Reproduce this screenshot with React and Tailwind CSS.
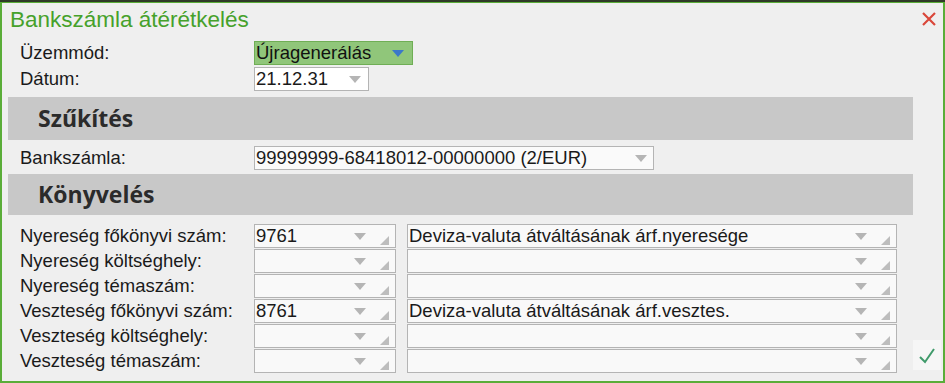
import React from "react";

const font = { fontFamily: '"Liberation Sans", Arial, sans-serif' };

function Tri({ color = "#b5b5b5" }) {
  return (
    <svg width="12" height="7" viewBox="0 0 12 7" className="shrink-0">
      <path d="M0 0 L12 0 L6 7 Z" fill={color} />
    </svg>
  );
}

function Corner() {
  return (
    <svg width="9" height="9" viewBox="0 0 9 9" className="shrink-0">
      <path d="M9 0 L9 9 L0 9 Z" fill="#bdbdbd" />
    </svg>
  );
}

function Field({ value, w, corner, bg = "bg-[#f9f9f9]" }) {
  return (
    <div
      className={`flex h-[24px] items-center border border-[#b4b4b4] ${bg} pl-[1px] pr-[6px]`}
      style={{ width: w }}
    >
      <span className="flex-1 overflow-hidden whitespace-nowrap text-[18.5px] leading-[22px] text-[#1a1a1a]">{value}</span>
      <div className="mt-[1px] flex items-center gap-[14px]">
        <Tri />
        {corner && <div className="mt-[7px]"><Corner /></div>}
      </div>
    </div>
  );
}

function Section({ title, h }) {
  return (
    <div
      className="mr-[30px] ml-[6px] flex items-center bg-[#c8c8c8] pl-[30px]"
      style={{ height: h }}
    >
      <span
        className="text-[23px] font-bold text-[#2b2b2b]"
        style={{ fontFamily: '"Open Sans", "Noto Sans", sans-serif' }}
      >
        {title}
      </span>
    </div>
  );
}

const rows = [
  ["Nyereség főkönyvi szám:", "9761", "Deviza-valuta átváltásának árf.nyeresége"],
  ["Nyereség költséghely:", "", ""],
  ["Nyereség témaszám:", "", ""],
  ["Veszteség főkönyvi szám:", "8761", "Deviza-valuta átváltásának árf.vesztes."],
  ["Veszteség költséghely:", "", ""],
  ["Veszteség témaszám:", "", ""],
];

export default function App() {
  return (
    <div className="h-[383px] w-[945px] bg-[#2f3a28] pt-[2px]" style={font}>
      <div className="flex h-[381px] flex-col border-2 border-t-1 border-[#5aad38] bg-[#efefef]">
        <div className="flex h-[34px] items-center justify-between pl-[8px] pr-[6px]">
          <span className="text-[22.5px] text-[#46a12b]">Bankszámla átérétkelés</span>
          <svg width="16" height="16" viewBox="0 0 16 16" className="mb-[2px]">
            <path d="M2 2 L14 14 M14 2 L2 14" stroke="#d9473a" strokeWidth="2.2" />
          </svg>
        </div>

        <div className="mt-[4px] flex h-[24px] items-center pl-[18px]">
          <span className="w-[234px] text-[18.5px] text-[#1a1a1a]">Üzemmód:</span>
          <div className="flex h-[24px] w-[159px] items-center border border-[#6fae55] bg-[#90c67a] pl-[1px] pr-[8px]">
            <span className="flex-1 text-[18.5px] leading-[22px] text-[#111]">Újragenerálás</span>
            <Tri color="#3b78c9" />
          </div>
        </div>
        <div className="mt-[2px] flex h-[24px] items-center pl-[18px]">
          <span className="w-[234px] text-[18.5px] text-[#1a1a1a]">Dátum:</span>
          <div className="flex h-[24px] w-[115px] items-center border border-[#b4b4b4] bg-white pl-[1px] pr-[7px]">
            <span className="flex-1 text-[18.5px] leading-[22px] text-[#1a1a1a]">21.12.31</span>
            <Tri />
          </div>
        </div>

        <div className="mt-[6px]">
          <Section title="Szűkítés" h={43} />
        </div>

        <div className="mt-[6px] flex h-[24px] items-center pl-[18px]">
          <span className="w-[234px] text-[18.5px] text-[#1a1a1a]">Bankszámla:</span>
          <Field value="99999999-68418012-00000000 (2/EUR)" w={400} bg="bg-[#fafafa]" />
        </div>

        <div className="mt-[4px]">
          <Section title="Könyvelés" h={41} />
        </div>

        <div className="relative mt-[9px] flex flex-col">
          {rows.map(([label, code, name], i) => (
            <div key={i} className="flex h-[25px] items-start pl-[18px]">
              <span className="flex h-[24px] w-[234px] items-center text-[18.5px] text-[#1a1a1a]">{label}</span>
              <Field value={code} w={142} corner />
              <div className="ml-[11px]">
                <Field value={name} w={490} corner />
              </div>
            </div>
          ))}
          <div className="absolute right-[2px] bottom-[4px] flex h-[30px] w-[28px] items-center justify-center bg-[#f6f6f6]">
            <svg width="18" height="17" viewBox="0 0 18 17">
              <path d="M2 10 L7 15 L16 2" fill="none" stroke="#3f9a6a" strokeWidth="2" />
            </svg>
          </div>
        </div>
      </div>
    </div>
  );
}
